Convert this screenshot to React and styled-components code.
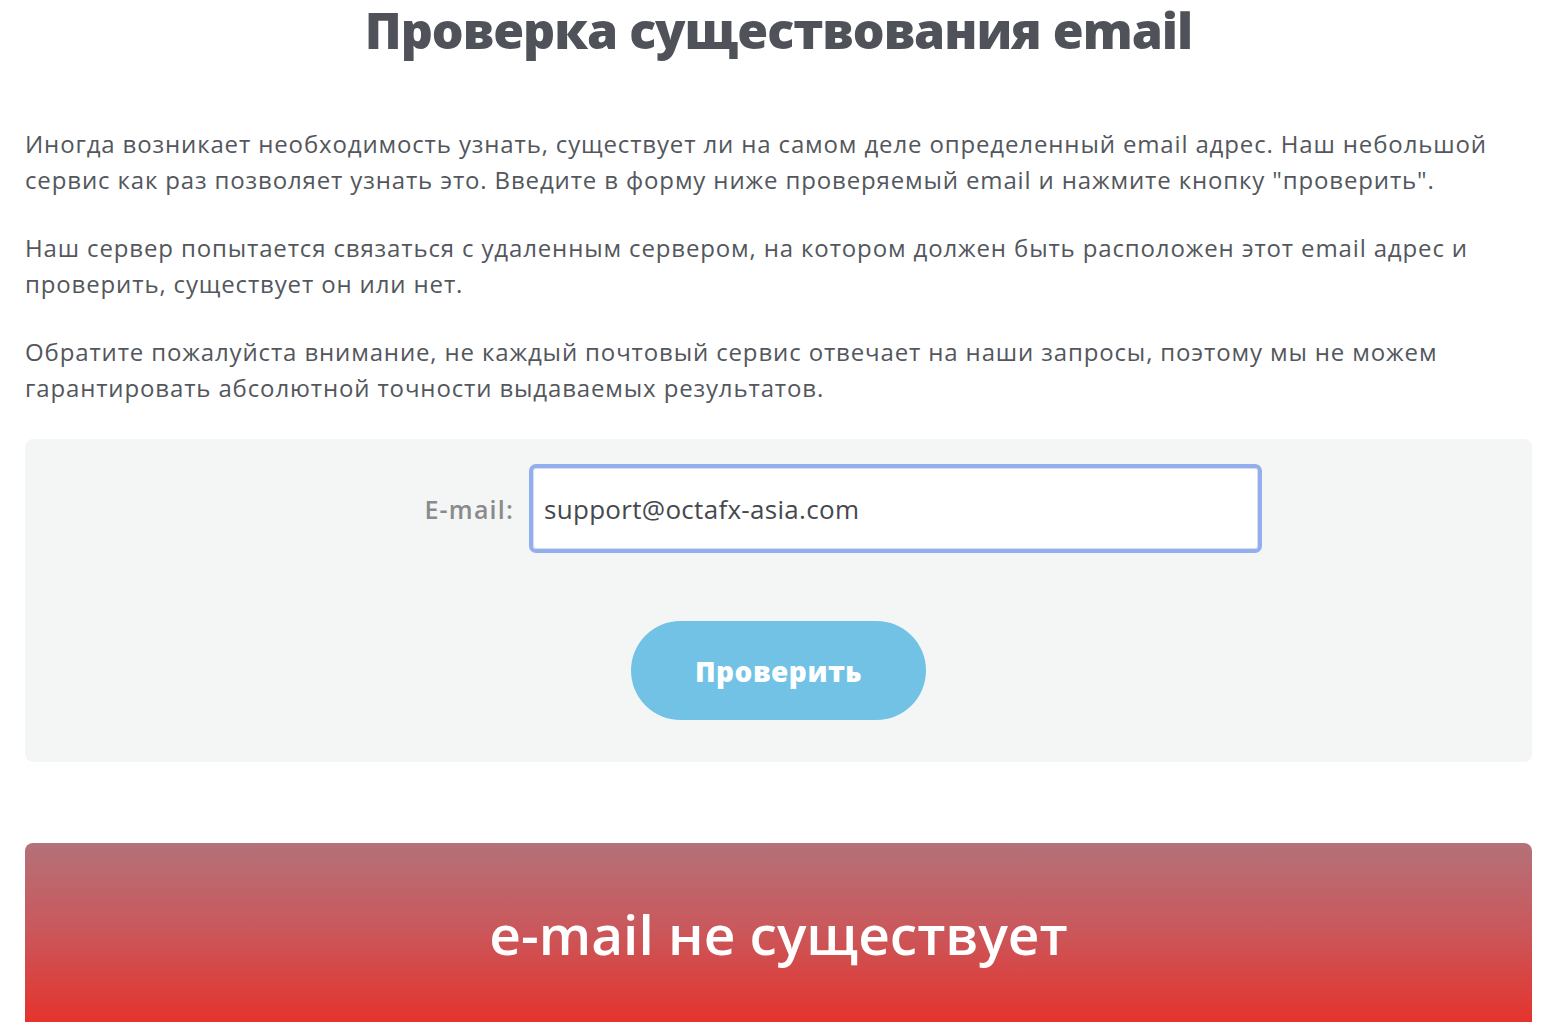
import React from "react";
import styled, { createGlobalStyle } from "styled-components";

const Global = createGlobalStyle`
  html, body { margin: 0; padding: 0; background: #ffffff; }
  body { font-family: "Open Sans", "Noto Sans", sans-serif; color: #53575d; }
  * { box-sizing: border-box; }
`;

const Page = styled.main`
  width: 1507px;
  margin-left: 25px;
  display: flex;
  flex-direction: column;
`;

const Title = styled.h1`
  margin: 0;
  padding-top: 4px;
  text-align: center;
  font-family: "Open Sans", sans-serif;
  font-weight: 800;
  font-size: 50px;
  letter-spacing: -1px;
  line-height: 52px;
  color: #4f5359;
`;

const Intro = styled.div`
  margin-top: 70px;
  display: flex;
  flex-direction: column;
  gap: 32px;
`;

const Para = styled.p`
  margin: 0;
  font-family: "Open Sans", sans-serif;
  font-weight: 500;
  font-size: 24px;
  letter-spacing: 0.86px;
  line-height: 36px;
  color: #53575d;
`;

const FormBox = styled.form`
  margin-top: 33px;
  background: #f4f5f5;
  border-radius: 8px;
  padding: 25px 0 42px;
  display: flex;
  flex-direction: column;
  align-items: center;
  gap: 68px;
`;

const Row = styled.div`
  align-self: stretch;
  display: grid;
  grid-template-columns: 489px 733px 1fr;
  column-gap: 15px;
  align-items: center;
`;

const Label = styled.label`
  text-align: right;
  font-family: "Open Sans", sans-serif;
  font-weight: 600;
  font-size: 25px;
  letter-spacing: 1.2px;
  color: #8a8b8c;
`;

const Input = styled.input`
  width: 733px;
  height: 89px;
  border: 4px solid #93aeee;
  border-radius: 7px;
  box-shadow: inset 0 0 0 1px #d9dee8;
  background: #ffffff;
  padding: 0 11px;
  font-family: "Open Sans", sans-serif;
  font-size: 26px;
  letter-spacing: 0.3px;
  color: #45494e;
  outline: none;
`;

const Button = styled.button`
  width: 295px;
  height: 99px;
  border: none;
  border-radius: 50px;
  background: #72c2e6;
  color: #ffffff;
  font-family: "Open Sans", sans-serif;
  font-weight: 800;
  font-size: 28px;
  letter-spacing: 0.5px;
  cursor: pointer;
`;

const Result = styled.div`
  margin-top: 81px;
  height: 200px;
  padding-bottom: 20px;
  border-radius: 8px;
  background: linear-gradient(180deg, #b47179 0px, #c85a5e 80px, #e5332d 180px, #e5332d 200px);
  display: flex;
  align-items: center;
  justify-content: center;
  color: #ffffff;
  font-family: "Open Sans", sans-serif;
  font-weight: 600;
  font-size: 55px;
`;

export default function App() {
  return (
    <>
      <Global />
      <Page>
        <Title>Проверка существования email</Title>
        <Intro>
          <Para>
            Иногда возникает необходимость узнать, существует ли на самом деле определенный email адрес. Наш небольшой сервис как раз позволяет узнать это. Введите в форму ниже проверяемый email и нажмите кнопку "проверить".
          </Para>
          <Para>
            Наш сервер попытается связаться с удаленным сервером, на котором должен быть расположен этот email адрес и проверить, существует он или нет.
          </Para>
          <Para>
            Обратите пожалуйста внимание, не каждый почтовый сервис отвечает на наши запросы, поэтому мы не можем гарантировать абсолютной точности выдаваемых результатов.
          </Para>
        </Intro>
        <FormBox onSubmit={(e) => e.preventDefault()}>
          <Row>
            <Label htmlFor="email">E-mail:</Label>
            <Input id="email" type="text" defaultValue="support@octafx-asia.com" />
          </Row>
          <Button type="submit">Проверить</Button>
        </FormBox>
        <Result>e-mail не существует</Result>
      </Page>
    </>
  );
}
